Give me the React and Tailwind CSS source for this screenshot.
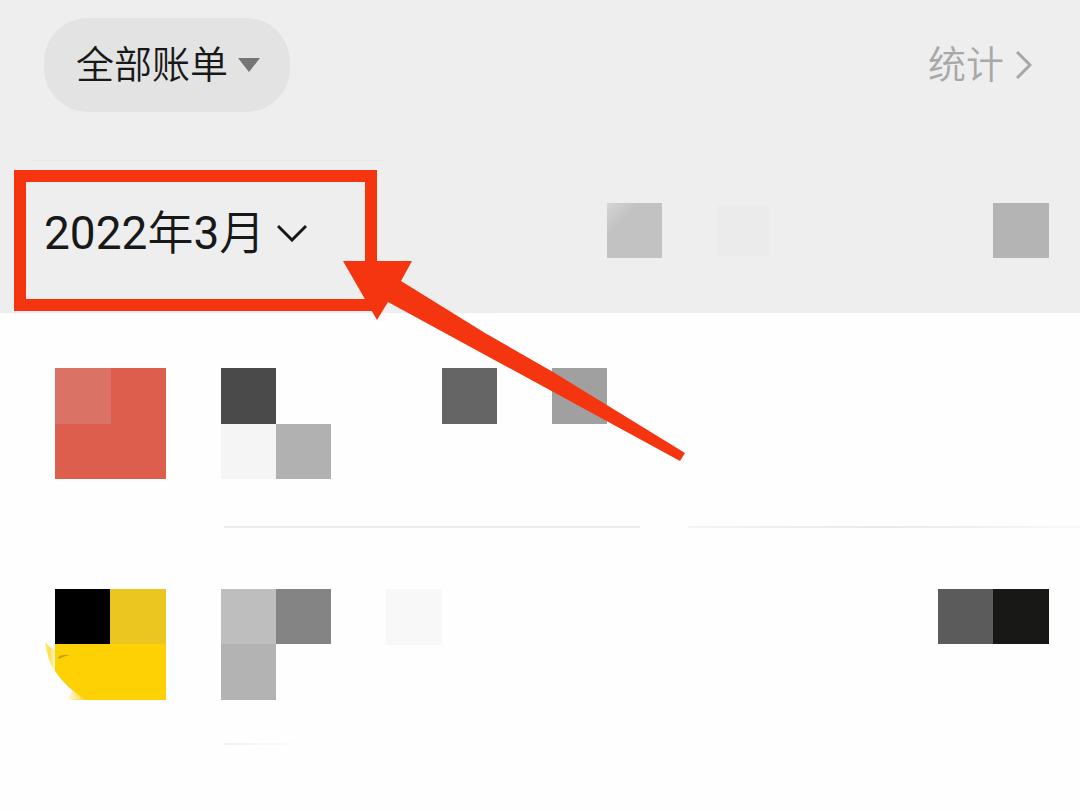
import React from "react";

function RedAvatar() {
  return (
    <div className="ml-[55px] h-[111px] w-[111px] shrink-0 bg-[#dd5e4c]">
      <div className="h-14 w-14 bg-[#da7365]" />
    </div>
  );
}

function YellowAvatar() {
  return (
    <svg className="ml-11 h-[111px] w-[122px] shrink-0" viewBox="0 0 122 111" aria-hidden="true">
      <defs>
        <linearGradient id="edge" x1="0" y1="0" x2="1" y2="0">
          <stop offset="0" stopColor="#fdd10a" stopOpacity="0.5" />
          <stop offset="0.5" stopColor="#fdd10a" stopOpacity="0.7" />
          <stop offset="1" stopColor="#fdd10a" stopOpacity="0.15" />
        </linearGradient>
        <linearGradient id="foot" x1="0" y1="0" x2="1" y2="0">
          <stop offset="0" stopColor="#fdd10a" stopOpacity="0" />
          <stop offset="1" stopColor="#fdd10a" />
        </linearGradient>
      </defs>
      <path d="M1 53 Q5 58 11 61 V83 Q3 70 1 53Z" fill="url(#edge)" />
      <path d="M22 111 L30 99 L44 111Z" fill="url(#foot)" />
      <path d="M11 55 H122 V111 H42 Q22 99 11 82Z" fill="#fdd103" />
      <path d="M14 69 Q16 65 26 66 Q20 67 15 70Z" fill="#c5a20a" />
      <rect x="11" width="55" height="55" fill="#000" />
      <rect x="66" width="56" height="55" fill="#ebc621" />
    </svg>
  );
}

function Header() {
  return (
    <header className="bg-[#eeeeee] pt-[18px] pb-[2px]">
      <div className="flex items-center justify-between pr-12 pl-11">
        <button
          type="button"
          className="flex h-[94px] items-center gap-2.5 rounded-[44px] bg-[#e3e3e3] pr-[30px] pl-8 text-[38px] leading-none font-[350] text-[#181818]"
        >
          <span>全部账单</span>
          <svg className="h-[14px] w-[22px]" viewBox="0 0 22 14" aria-hidden="true">
            <path d="M0 0H22L11 14Z" fill="#757575" />
          </svg>
        </button>
        <a href="#stats" className="flex items-center gap-3 text-[38px] leading-none font-[350] text-[#a8a8a8]">
          <span>统计</span>
          <svg className="h-7 w-4" viewBox="0 0 16 28" fill="none" stroke="#a6a6a6" strokeWidth="3" aria-hidden="true">
            <path d="M1 1L14 14L1 27" />
          </svg>
        </a>
      </div>

      <div className="mt-12 mb-[9px] ml-8 h-px w-[352px] bg-[#e8e6e6]" />

      <div className="flex items-start justify-between pr-[31px] pl-[14px]">
        <button
          type="button"
          className="flex h-[141px] w-[363px] shrink-0 items-center gap-3 border-12 border-[#f53510] pb-4 pl-[18px] text-[46px] leading-none font-[350] text-[#181818]"
        >
          <span>
            <span className="font-normal">2022</span>年<span className="font-normal">3</span>月
          </span>
          <svg className="h-[18px] w-[30px]" viewBox="0 0 30 18" fill="none" stroke="#181818" strokeWidth="3" aria-hidden="true">
            <path d="M1 2L15 16L29 2" />
          </svg>
        </button>
        <div className="mt-[33px] flex grow items-center pl-[230px]">
          <span className="h-[55px] w-[55px] shrink-0 bg-linear-135 from-[#d6d6d6] to-[#c2c2c2] to-30%" />
          <span className="ml-14 size-[51px] shrink-0 bg-[#ebebeb]" />
          <span className="ml-auto h-[55px] w-14 shrink-0 bg-[#b4b4b4]" />
        </div>
      </div>
    </header>
  );
}

function Bills() {
  return (
    <ul>
      <li className="pt-[55px]">
        <div className="flex items-start">
          <RedAvatar />
          <div className="ml-[55px] grid shrink-0 grid-cols-[55px_55px]">
            <span className="h-14 bg-[#4a4a4a]" />
            <span className="h-14" />
            <span className="h-[55px] bg-[#f5f5f5]" />
            <span className="h-[55px] bg-[#b1b1b1]" />
          </div>
          <span className="ml-[111px] h-14 w-[55px] shrink-0 bg-[#656565]" />
          <span className="ml-[55px] h-14 w-[55px] shrink-0 bg-[#a0a0a0]" />
        </div>
        <div className="mt-[47px] ml-56 flex gap-12">
          <span className="h-[2px] w-[416px] bg-[#ebebeb]" />
          <span className="h-[2px] grow bg-linear-to-r from-[#f4f4f4] via-[#e9e9e9] to-[#f8f8f8]" />
        </div>
      </li>
      <li className="pt-[61px]">
        <div className="flex items-start">
          <YellowAvatar />
          <div className="ml-[55px] grid shrink-0 grid-cols-[55px_55px]">
            <span className="h-[55px] bg-[#bebebe]" />
            <span className="h-[55px] bg-[#848484]" />
            <span className="h-14 bg-[#b3b3b3]" />
          </div>
          <span className="ml-[55px] size-14 shrink-0 bg-[#f8f8f8]" />
          <div className="mr-[31px] ml-auto flex shrink-0">
            <span className="h-[55px] w-[55px] bg-[#5b5b5c]" />
            <span className="h-[55px] w-14 bg-[#181817]" />
          </div>
        </div>
        <div className="mt-[43px] ml-56 h-[2px] w-[88px] bg-linear-to-r from-[#f1f1f1] to-white" />
      </li>
    </ul>
  );
}

export default function App() {
  return (
    <main className="relative min-h-screen overflow-hidden bg-[#fefefe] font-['Roboto','Noto_Sans_CJK_SC',sans-serif]">
      <Header />
      <Bills />
      <svg
        className="pointer-events-none absolute top-[261px] left-[343px] h-[201px] w-[343px]"
        viewBox="343 261 343 201"
        aria-hidden="true"
      >
        <path d="M343 261H412L401 281L485 333L553 372L685 453L680 461L388 302L377 320Z" fill="#f53510" />
      </svg>
    </main>
  );
}
